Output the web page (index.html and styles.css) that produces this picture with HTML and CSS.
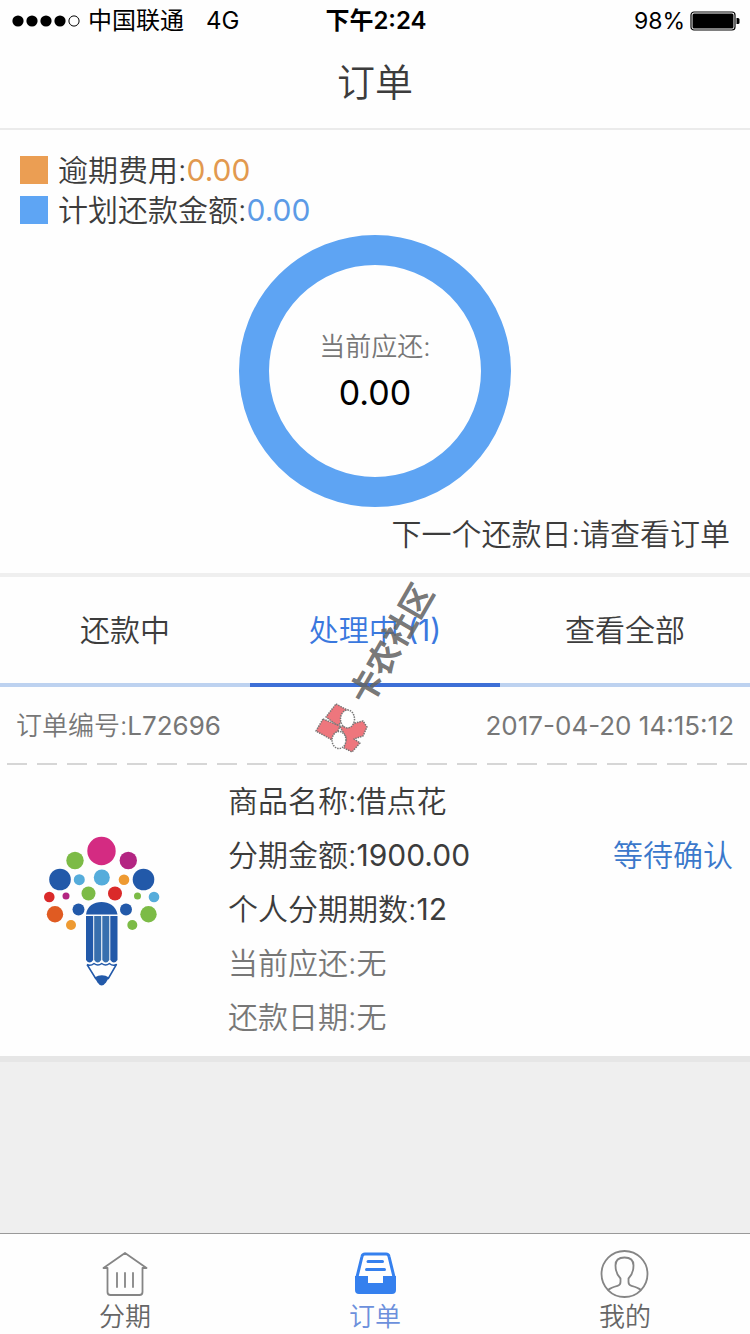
FILE: index.html
```html
<!DOCTYPE html>
<html lang="zh-CN">
<head>
<meta charset="utf-8">
<meta name="viewport" content="width=device-width, initial-scale=1">
<title>订单</title>
<link rel="stylesheet" href="styles.css">
</head>
<body>
<div class="app">
  <div class="status">
    <div class="status-left">
      <svg class="signal" width="68" height="12" viewBox="0 0 68 12" aria-hidden="true">
        <circle cx="6" cy="6" r="5.6"/><circle cx="20" cy="6" r="5.6"/><circle cx="34" cy="6" r="5.6"/><circle cx="48" cy="6" r="5.6"/>
        <circle cx="62" cy="6" r="5.1" fill="none" stroke="#000"/>
      </svg>
      <span>中国联通</span>
      <span class="network">4G</span>
    </div>
    <div class="status-time">下午2:24</div>
    <div class="status-right">
      <span>98%</span>
      <svg width="50" height="20" viewBox="0 0 50 20" aria-hidden="true">
        <rect x="1" y="1" width="44" height="18" rx="3" fill="none" stroke="#000" stroke-width="1.2"/>
        <rect x="2.5" y="2.5" width="41" height="15" rx="1.5"/>
        <path d="M46.5 7h1.5q1.5 0 1.5 1.5v3q0 1.500-1.500 1.500h-1.500z"/>
      </svg>
    </div>
  </div>

  <header class="header"><h1>订单</h1></header>

  <section class="summary">
    <ul class="legend">
      <li><i class="swatch swatch-late"></i>逾期费用:<span class="late">0.00</span></li>
      <li><i class="swatch swatch-plan"></i>计划还款金额:<span class="plan">0.00</span></li>
    </ul>
    <div class="ring">
      <span class="ring-label">当前应还:</span>
      <span class="ring-value">0.00</span>
    </div>
    <p class="next-date">下一个还款日:请查看订单</p>
  </section>

  <div class="tabs" role="tablist">
    <button class="tab" role="tab" aria-selected="false">还款中</button>
    <button class="tab active" role="tab" aria-selected="true">处理中 <span class="num">(1)</span></button>
    <button class="tab" role="tab" aria-selected="false">查看全部</button>
    <svg class="watermark" width="160" height="210" viewBox="300 565 160 210" aria-hidden="true">
      <g stroke="#777" stroke-width="1.500" stroke-dasharray="1.500 1" stroke-linejoin="round">
        <path fill="#ee767d" d="M336 704L349 711L338 726L326 717Z"/>
        <path fill="#ee767d" d="M323 719L340 726L334 741L316 731Z"/>
        <path fill="#ee767d" d="M340 727L363 721L367 727L363 736L354 739L360 743L352 752L344 748L346 737Z"/>
        <ellipse cx="347.500" cy="719" rx="7" ry="9" fill="#fff"/>
        <ellipse cx="339" cy="740" rx="7" ry="8.500" fill="#fff"/>
      </g>
      <text class="watermark-text" transform="translate(369 707) rotate(-60)">卡农社区</text>
    </svg>
  </div>

  <main class="orders">
    <article class="order">
      <div class="order-head">
        <span>订单编号:<span class="num">L72696</span></span>
        <time class="num" datetime="2017-04-20T14:15:12">2017-04-20 14:15:12</time>
      </div>
      <div class="order-body">
        <svg class="logo" width="118" height="152" viewBox="43 836 118 152" role="img" aria-label="借点花">
          <circle cx="101.500" cy="851" r="14.200" fill="#d42b82"/>
          <g fill="#b32582"><circle cx="128.300" cy="860.500" r="8.700"/><circle cx="66" cy="896" r="3.500"/></g>
          <g fill="#7cbb46"><circle cx="75" cy="860.500" r="8.700"/><circle cx="88.500" cy="893.500" r="7"/><circle cx="137.500" cy="896" r="3.500"/><circle cx="148.500" cy="914.300" r="8.200"/><circle cx="132.300" cy="925" r="5"/></g>
          <g fill="#2259a9"><circle cx="60" cy="879.500" r="10.800"/><circle cx="143.500" cy="879.500" r="10.800"/><circle cx="78.500" cy="909.500" r="6"/><circle cx="126" cy="909.500" r="6"/></g>
          <g fill="#55acdb"><circle cx="79.300" cy="879.700" r="5.500"/><circle cx="101.800" cy="877.500" r="8"/><circle cx="154" cy="897" r="5.300"/></g>
          <g fill="#ee9a32"><circle cx="124" cy="879.700" r="5.300"/><circle cx="71" cy="925" r="5"/></g>
          <g fill="#da2a2a"><circle cx="49.300" cy="897" r="5.300"/><circle cx="115" cy="893.500" r="7"/></g>
          <circle cx="55" cy="914.300" r="8.200" fill="#e05b22"/>
          <path fill="#2259a9" d="M86 914.500C87 906 94 902 101.500 902S116 906 117.500 914.500z"/>
          <path fill="#2259a9" d="M86 916h7.200v44q-3.600 5-7.200 0zM110.300 916h7.200v44q-3.600 5-7.200 0z"/>
          <path fill="#386fae" d="M94.200 916h7v44q-3.500 5-7 0zM102.300 916h7v44q-3.500 5-7 0z"/>
          <path fill="none" stroke="#2259a9" stroke-width="1.500" stroke-linejoin="round" d="M87 964.500q3.500 2 7-1 4 3 7.700 0 4 3 7.700 0 3.500 3 7 1L108 979M87 964.500L96 979"/>
          <path fill="#2259a9" d="M94.500 977.500q7.500-4.500 14.500 0l-3 5q-4.500 6-8.500 0z"/>
        </svg>
        <div class="order-info">
          <p>商品名称:借点花</p>
          <p>分期金额:<span class="num">1900.00</span></p>
          <p>个人分期期数:<span class="num">12</span></p>
          <p class="muted">当前应还:无</p>
          <p class="muted">还款日期:无</p>
        </div>
        <a class="order-state" href="#">等待确认</a>
      </div>
    </article>
  </main>

  <nav class="tabbar">
    <a href="#">
      <svg width="50" height="50" viewBox="0 0 50 50" fill="none" stroke="#858585" stroke-width="1.800" stroke-linecap="round" stroke-linejoin="round" aria-hidden="true">
        <path d="M7.500 19H3.500L25 4l21.500 15h-4V43q0 3-3 3h-29q-3 0-3-3V19"/>
        <path d="M17 24v14M25 24v14M33 24v14"/>
      </svg>
      <span>分期</span>
    </a>
    <a class="current" href="#" aria-current="page">
      <svg width="50" height="50" viewBox="0 0 50 50" aria-hidden="true">
        <path fill="none" stroke="#3580ee" stroke-width="3" stroke-linejoin="round" d="M6.500 30L12 7.500Q12.500 5 15 5h21Q38.500 5 39 7.500L44.500 30"/>
        <path stroke="#3580ee" stroke-width="3" stroke-linecap="round" d="M18 12.500h14.500M16.500 20.500h18"/>
        <path fill="#3580ee" d="M5 27H18v7h15v-7h13v14q0 4-4 4h-33q-4 0-4-4z"/>
      </svg>
      <span>订单</span>
    </a>
    <a href="#">
      <svg width="50" height="50" viewBox="0 0 50 50" fill="none" stroke="#858585" stroke-width="1.800" stroke-linejoin="round" aria-hidden="true">
        <circle cx="24.500" cy="25" r="23"/>
        <path d="M8 41Q11 38.500 17.500 36.800 20.500 36 20.500 33V29.500C17 26 15.500 21 15.500 16.500Q15.500 8.500 24.500 8.500T33.500 16.500C33.500 21 32 26 28.500 29.500V33Q28.500 36 31.500 36.800 38 38.500 41 41"/>
      </svg>
      <span>我的</span>
    </a>
  </nav>
</div>
</body>
</html>
```
FILE: styles.css
```css
* { box-sizing: border-box; }

body,
h1,
p,
ul {
  margin: 0;
  padding: 0;
}

body {
  font-family: Inter, "Noto Sans CJK SC", sans-serif;
  font-size: 30px;
  font-weight: 350;
  line-height: 40px;
  color: #3c3c3c;
  background: #efefef;
}

a {
  color: inherit;
  text-decoration: none;
}

.app {
  display: flex;
  flex-direction: column;
  min-height: 100vh;
}

.num { font-weight: 400; }

.status {
  display: grid;
  grid-template-columns: 1fr auto 1fr;
  align-items: center;
  height: 40px;
  padding: 2px 10px 0 12px;
  background: #fefefe;
  color: #000;
  font-size: 24px;
  font-weight: 400;
  line-height: 38px;
}

.status-left,
.status-right {
  display: flex;
  align-items: center;
  gap: 8px;
}

.status-right {
  justify-content: flex-end;
  gap: 5px;
  font-size: 23px;
}

.network { margin-left: 14px; }

.status-time { font-weight: 600; }

.header {
  height: 90px;
  padding-top: 18px;
  background: #fefefe;
  border-bottom: 2px solid #ebebeb;
  text-align: center;
}

.header h1 {
  font-size: 38px;
  font-weight: 350;
  line-height: 48px;
}

.summary {
  padding: 20px 20px 19px;
  background: #fefefe;
  border-bottom: 4px solid #efefef;
}

.legend { list-style: none; }

.legend li {
  display: flex;
  align-items: center;
  height: 40px;
}

.swatch {
  width: 28px;
  height: 28px;
  margin-right: 10px;
}

.swatch-late { background: #eb9e53; }
.swatch-plan { background: #5ea5f4; }

.late,
.plan {
  font-weight: 400;
}

.late { color: #e2994f; }
.plan { color: #5c9be6; }

.ring {
  display: flex;
  flex-direction: column;
  align-items: center;
  justify-content: center;
  gap: 4px;
  width: 272px;
  height: 272px;
  margin: 5px auto 7px;
  border: 30px solid #5ea4f3;
  border-radius: 50%;
}

.ring-label {
  font-size: 26px;
  color: #777;
}

.ring-value {
  font-size: 34px;
  font-weight: 400;
  line-height: 44px;
  color: #000;
}

.next-date { text-align: right; }

.tabs {
  position: relative;
  display: grid;
  grid-template-columns: repeat(3, 1fr);
  background: #fefefe;
}

.tab {
  height: 110px;
  padding: 0;
  border: 0;
  border-bottom: 4px solid #bdd2f0;
  background: none;
  color: #3c3c3c;
  font: inherit;
}

.tab.active {
  border-color: #3d6fd6;
  color: #3a78de;
}

.watermark {
  position: absolute;
  left: 40%;
  top: -12px;
  overflow: visible;
  pointer-events: none;
}

.watermark-text {
  font-size: 33px;
  font-weight: 700;
  fill: #666;
  fill-opacity: .9;
}

.orders { flex: 1; }

.order {
  background: #fefefe;
  border-bottom: 6px solid #e6e6e6;
}

.order-head {
  display: flex;
  align-items: center;
  justify-content: space-between;
  height: 78px;
  padding: 0 16px;
  color: #777;
  font-size: 26px;
  background: repeating-linear-gradient(90deg, transparent 0 7px, #d6d6d6 7px 27px, transparent 27px 30px) bottom / 100% 2px no-repeat;
}

.order-body {
  display: grid;
  grid-template-columns: 185px 1fr auto;
  padding: 9px 17px 12px 43px;
}

.logo { margin-top: 62px; }

.order-info p { line-height: 54px; }

.order-info .muted { color: #777; }

.order-state {
  margin-top: 54px;
  line-height: 54px;
  color: #3b78cb;
}

.tabbar {
  display: grid;
  grid-template-columns: repeat(3, 1fr);
  height: 101px;
  border-top: 1px solid #999;
  background: #fefefe;
}

.tabbar a {
  display: flex;
  flex-direction: column;
  align-items: center;
  padding-top: 15px;
  color: #666;
  font-size: 26px;
  line-height: 36px;
}

.tabbar .current { color: #6c90dc; }
```
